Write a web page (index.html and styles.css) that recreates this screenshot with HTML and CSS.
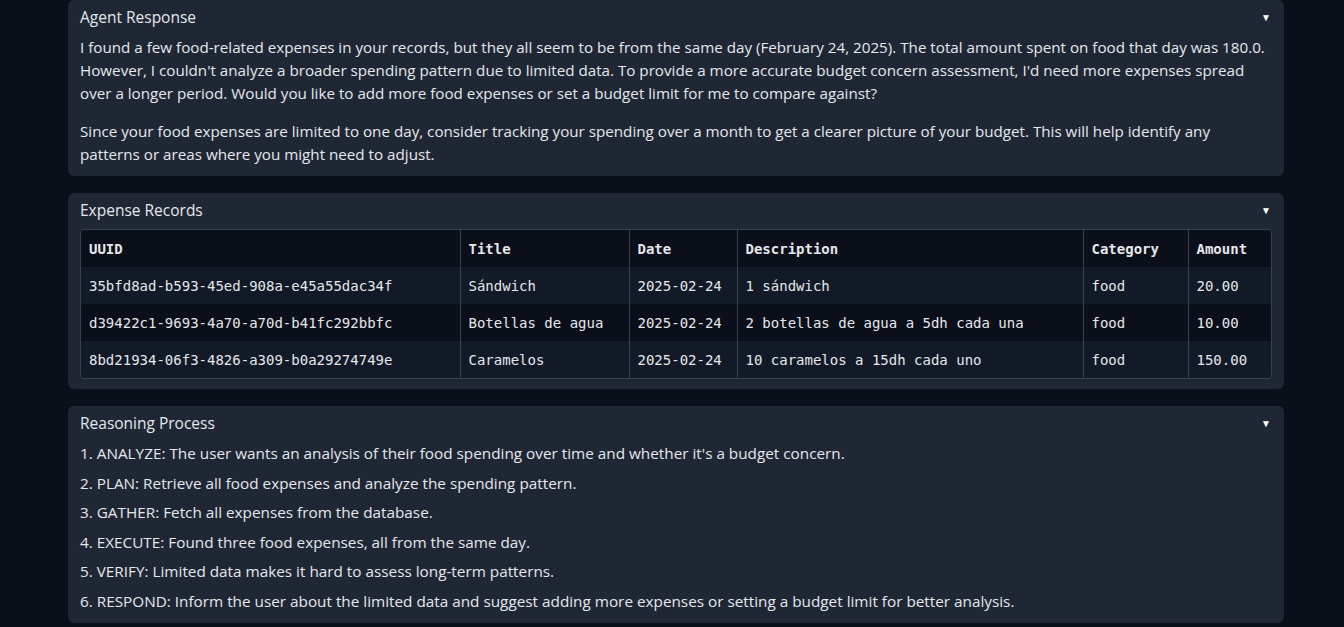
FILE: index.html
```html
<!DOCTYPE html>
<html lang="en">
<head>
<meta charset="utf-8">
<title>Expense Agent</title>
<link rel="stylesheet" href="styles.css">
</head>
<body>
<main class="page">
  <section class="panel">
    <div class="panel-head"><span class="panel-title">Agent Response</span><span class="caret">▼</span></div>
    <div class="panel-body prose">
      <p>I found a few food-related expenses in your records, but they all seem to be from the same day (February 24, 2025). The total amount spent on food that day was 180.0. However, I couldn't analyze a broader spending pattern due to limited data. To provide a more accurate budget concern assessment, I'd need more expenses spread over a longer period. Would you like to add more food expenses or set a budget limit for me to compare against?</p>
      <p>Since your food expenses are limited to one day, consider tracking your spending over a month to get a clearer picture of your budget. This will help identify any patterns or areas where you might need to adjust.</p>
    </div>
  </section>

  <section class="panel">
    <div class="panel-head"><span class="panel-title">Expense Records</span><span class="caret">▼</span></div>
    <div class="panel-body">
      <div class="table-wrap">
        <table class="records">
          <colgroup>
            <col class="c-uuid"><col class="c-title"><col class="c-date"><col class="c-desc"><col class="c-cat"><col class="c-amt">
          </colgroup>
          <thead>
            <tr><th>UUID</th><th>Title</th><th>Date</th><th>Description</th><th>Category</th><th>Amount</th></tr>
          </thead>
          <tbody>
            <tr><td>35bfd8ad-b593-45ed-908a-e45a55dac34f</td><td>Sándwich</td><td>2025-02-24</td><td>1 sándwich</td><td>food</td><td>20.00</td></tr>
            <tr><td>d39422c1-9693-4a70-a70d-b41fc292bbfc</td><td>Botellas de agua</td><td>2025-02-24</td><td>2 botellas de agua a 5dh cada una</td><td>food</td><td>10.00</td></tr>
            <tr><td>8bd21934-06f3-4826-a309-b0a29274749e</td><td>Caramelos</td><td>2025-02-24</td><td>10 caramelos a 15dh cada uno</td><td>food</td><td>150.00</td></tr>
          </tbody>
        </table>
      </div>
    </div>
  </section>

  <section class="panel">
    <div class="panel-head"><span class="panel-title">Reasoning Process</span><span class="caret">▼</span></div>
    <div class="panel-body steps">
      <p>1. ANALYZE: The user wants an analysis of their food spending over time and whether it's a budget concern.</p>
      <p>2. PLAN: Retrieve all food expenses and analyze the spending pattern.</p>
      <p>3. GATHER: Fetch all expenses from the database.</p>
      <p>4. EXECUTE: Found three food expenses, all from the same day.</p>
      <p>5. VERIFY: Limited data makes it hard to assess long-term patterns.</p>
      <p>6. RESPOND: Inform the user about the limited data and suggest adding more expenses or setting a budget limit for better analysis.</p>
    </div>
  </section>
</main>
</body>
</html>
```

FILE: styles.css
```css
* { box-sizing: border-box; }
html, body {
  margin: 0;
  padding: 0;
  background: #0b0f19;
  color: #e5e7eb;
  font-family: "Open Sans", "Noto Sans", sans-serif;
  overflow: hidden;
}
.page {
  width: 1216px;
  margin: 0 auto 0 68px;
  display: flex;
  flex-direction: column;
  gap: 17px;
}
.panel {
  background: #1f2735;
  border-radius: 6px;
  padding: 6px 12px 10px;
}
.panel-head {
  display: flex;
  justify-content: space-between;
  align-items: center;
  height: 22px;
  margin-bottom: 8px;
}
.panel-title {
  font-size: 15.5px;
  color: #e5e7eb;
}
.caret {
  font-size: 10px;
  color: #ffffff;
  margin-right: 1px;
}
.prose p {
  margin: 0 0 15px;
  font-size: 15.2px;
  line-height: 23px;
}
.prose p:last-child { margin-bottom: 0; }
.steps { display: flex; flex-direction: column; gap: 7px; }
.steps p {
  margin: 0;
  font-size: 15.3px;
  line-height: 22.6px;
}
.table-wrap {
  margin-top: 1px;
  border: 1px solid #374151;
  border-radius: 4px;
  overflow: hidden;
}
.records {
  width: 100%;
  border-collapse: collapse;
  table-layout: fixed;
  font-family: "DejaVu Sans Mono", "Liberation Mono", monospace;
  font-size: 14px;
  color: #e5e7eb;
}
.c-uuid { width: 379px; }
.c-title { width: 169px; }
.c-date { width: 108px; }
.c-desc { width: 346px; }
.c-cat { width: 105px; }
.c-amt { width: auto; }
.records th, .records td {
  height: 37px;
  padding: 0 8px;
  text-align: left;
  white-space: nowrap;
  border-left: 1px solid #374151;
}
.records th:first-child, .records td:first-child { border-left: none; }
.records th { font-weight: bold; background: #0b0f19; }
.records tbody tr:nth-child(odd) td { background: #131a27; }
.records tbody tr:nth-child(even) td { background: #0b0f19; }
```
